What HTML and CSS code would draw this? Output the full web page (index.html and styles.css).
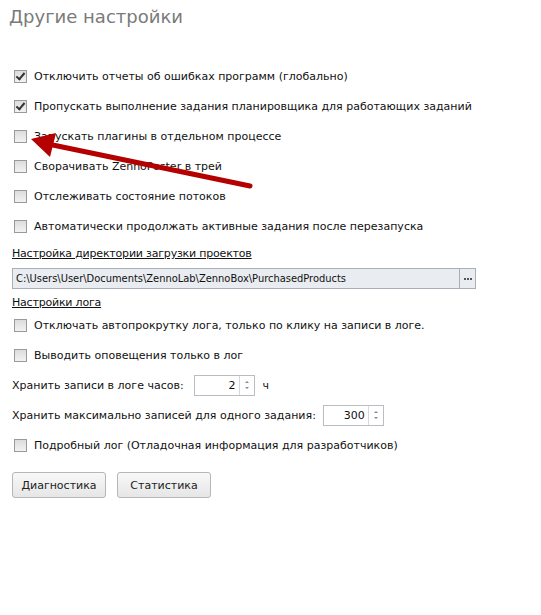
FILE: index.html
```html
<!DOCTYPE html>
<html>
<head>
<meta charset="utf-8">
<link rel="stylesheet" href="styles.css">
</head>
<body>
<div class="page">
  <h1 class="title">Другие настройки</h1>
  <div class="opts">
    <label class="row"><span class="cb checked"></span>Отключить отчеты об ошибках программ (глобально)</label>
    <label class="row"><span class="cb checked"></span>Пропускать выполнение задания планировщика для работающих заданий</label>
    <label class="row"><span class="cb"></span>Запускать плагины в отдельном процессе</label>
    <label class="row"><span class="cb"></span>Сворачивать ZennoPoster в трей</label>
    <label class="row"><span class="cb"></span>Отслеживать состояние потоков</label>
    <label class="row"><span class="cb"></span>Автоматически продолжать активные задания после перезапуска</label>
  </div>
  <div class="section">Настройка директории загрузки проектов</div>
  <div class="path">
    <div class="path-text">C:\Users\User\Documents\ZennoLab\ZennoBox\PurchasedProducts</div>
    <div class="path-btn"><i></i><i></i><i></i></div>
  </div>
  <div class="section second">Настройки лога</div>
  <div class="opts log">
    <label class="row"><span class="cb"></span>Отключать автопрокрутку лога, только по клику на записи в логе.</label>
    <label class="row"><span class="cb"></span>Выводить оповещения только в лог</label>
    <div class="row">Хранить записи в логе часов:<span class="spin first"><span class="val">2</span><span class="arr"><i class="up"></i><i class="dn"></i></span></span><span class="unit">ч</span></div>
    <div class="row">Хранить максимально записей для одного задания:<span class="spin"><span class="val">300</span><span class="arr"><i class="up"></i><i class="dn"></i></span></span></div>
    <label class="row"><span class="cb"></span>Подробный лог (Отладочная информация для разработчиков)</label>
  </div>
  <div class="buttons">
    <button class="btn">Диагностика</button>
    <button class="btn">Статистика</button>
  </div>
  <svg class="arrow" width="541" height="615" viewBox="0 0 541 615">
    <line x1="250" y1="186" x2="48" y2="144" stroke="#b40000" stroke-width="5" stroke-linecap="round"/>
    <polygon points="31,139 56,133 50,157" fill="#b40000"/>
  </svg>
</div>
</body>
</html>
```
FILE: styles.css
```css
html, body { margin: 0; padding: 0; background: #fff; }
body { font-family: "DejaVu Sans", Verdana, sans-serif; font-size: 11px; color: #111; }
.page { position: relative; width: 541px; height: 615px; padding: 0 0 0 12px; box-sizing: border-box; }
.title { margin: 0 0 0 -3px; padding-top: 5px; font-family: "DejaVu Sans", sans-serif; font-weight: normal; font-size: 18px; color: #7a7a7a; height: 56px; line-height: 24px; }
.opts { display: flex; flex-direction: column; }
.row { display: flex; align-items: center; height: 30px; white-space: nowrap; }
.cb { width: 11px; height: 11px; border: 1px solid #9a9a9a; background: linear-gradient(#dcdcdc, #f2f2f2); margin: 0 7px 0 2px; position: relative; flex: none; }
.cb.checked::after { content: ""; position: absolute; left: 3px; top: 0; width: 3px; height: 7px; border: solid #333; border-width: 0 2px 2px 0; transform: rotate(40deg); }
.section { text-decoration: underline; height: 20px; line-height: 20px; margin-top: 3px; letter-spacing: -0.2px; }
.section.second { margin-top: 4px; }
.path { display: flex; width: 464px; height: 21px; border: 1px solid #a9aeb7; background: #e9ecf0; margin: 4px 0 0; box-sizing: border-box; }
.path-text { flex: 1; line-height: 19px; padding-left: 3px; overflow: hidden; font-family: "DejaVu Sans Condensed", "DejaVu Sans", sans-serif; }
.path-btn { width: 15px; border-left: 1px solid #a9aeb7; display: flex; align-items: center; justify-content: center; gap: 1px; }
.path-btn i { width: 2px; height: 2px; background: #555; }
.log { margin-top: -3px; }
.spin { display: inline-flex; width: 61px; height: 21px; border: 1px solid #b8bcc3; margin-left: 7px; box-sizing: border-box; background: #fff; }
.spin.first { margin-left: 10px; }
.val { flex: 1; text-align: right; padding-right: 3px; line-height: 19px; }
.arr { width: 14px; border-left: 1px solid #d6d8dc; display: flex; flex-direction: column; align-items: center; justify-content: center; gap: 4px; }
.arr i { width: 0; height: 0; border-left: 2px solid transparent; border-right: 2px solid transparent; }
.arr .up { border-bottom: 2px solid #8a8a8a; }
.arr .dn { border-top: 2px solid #8a8a8a; }
.unit { margin-left: 8px; }
.buttons { display: flex; gap: 11px; margin-top: 12px; }
.btn { width: 94px; height: 26px; font-family: inherit; font-size: 11px; font-weight: normal; color: #222; border: 1px solid #b3b6bb; border-radius: 3px; background: linear-gradient(#f8f8f8, #e6e6e6); padding: 0; }
.arrow { position: absolute; left: 0; top: 0; pointer-events: none; }
```
